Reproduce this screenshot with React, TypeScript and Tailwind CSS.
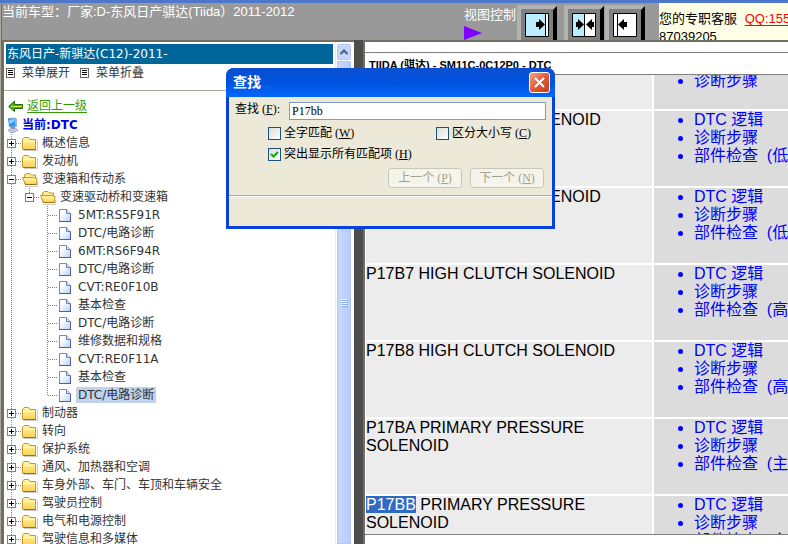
import type { ReactNode } from "react";
import { clsx } from "clsx";

type NodeKind = "closed" | "open" | "page";

type TreeNode = {
  label: string;
  kind: NodeKind;
  level: number;
  last?: boolean;
  selected?: boolean;
};

const tree: TreeNode[] = [
  { label: "概述信息", kind: "closed", level: 0 },
  { label: "发动机", kind: "closed", level: 0 },
  { label: "变速箱和传动系", kind: "open", level: 0 },
  { label: "变速驱动桥和变速箱", kind: "open", level: 1, last: true },
  { label: "5MT:RS5F91R", kind: "page", level: 2 },
  { label: "DTC/电路诊断", kind: "page", level: 2 },
  { label: "6MT:RS6F94R", kind: "page", level: 2 },
  { label: "DTC/电路诊断", kind: "page", level: 2 },
  { label: "CVT:RE0F10B", kind: "page", level: 2 },
  { label: "基本检查", kind: "page", level: 2 },
  { label: "DTC/电路诊断", kind: "page", level: 2 },
  { label: "维修数据和规格", kind: "page", level: 2 },
  { label: "CVT:RE0F11A", kind: "page", level: 2 },
  { label: "基本检查", kind: "page", level: 2 },
  { label: "DTC/电路诊断", kind: "page", level: 2, last: true, selected: true },
  { label: "制动器", kind: "closed", level: 0 },
  { label: "转向", kind: "closed", level: 0 },
  { label: "保护系统", kind: "closed", level: 0 },
  { label: "通风、加热器和空调", kind: "closed", level: 0 },
  { label: "车身外部、车门、车顶和车辆安全", kind: "closed", level: 0 },
  { label: "驾驶员控制", kind: "closed", level: 0 },
  { label: "电气和电源控制", kind: "closed", level: 0 },
  { label: "驾驶信息和多媒体", kind: "closed", level: 0 },
];

const codes = [
  { code: "P17B5", name: "LOW BRAKE SOLENOID", links: ["DTC 逻辑", "诊断步骤", "部件检查  (低"] },
  { code: "P17B6", name: "LOW BRAKE SOLENOID", links: ["DTC 逻辑", "诊断步骤", "部件检查  (低"] },
  { code: "P17B7", name: "HIGH CLUTCH SOLENOID", links: ["DTC 逻辑", "诊断步骤", "部件检查  (高"] },
  { code: "P17B8", name: "HIGH CLUTCH SOLENOID", links: ["DTC 逻辑", "诊断步骤", "部件检查  (高"] },
  { code: "P17BA", name: "PRIMARY PRESSURE SOLENOID", links: ["DTC 逻辑", "诊断步骤", "部件检查  (主"] },
  { code: "P17BB", name: "PRIMARY PRESSURE SOLENOID", links: ["DTC 逻辑", "诊断步骤", "部件检查  (主"], found: true },
];

const sans = "font-['Liberation_Sans','Noto_Sans_CJK_SC',sans-serif]";
const wide = "font-['DejaVu_Sans','Noto_Sans_CJK_SC',sans-serif]";
const serif = "font-['Liberation_Serif','Noto_Sans_CJK_SC',serif]";

function TreeLine({ box, last, dots = true }: { box?: "plus" | "minus"; last?: boolean; dots?: boolean }) {
  return (
    <svg width="18" height="18" className="shrink-0" shapeRendering="crispEdges" aria-hidden="true">
      <path d={last ? "M7.5 0V9" : "M7.5 0V18"} stroke="#808080" strokeDasharray="1 1" />
      {dots && <path d="M8 9.5H18" stroke="#808080" strokeDasharray="1 1" />}
      {box && (
        <>
          <rect x="3.5" y="5.5" width="8" height="8" fill="#fff" stroke="#808080" />
          <path d={box === "plus" ? "M5 9.5H10M7.5 7V12" : "M5 9.5H10"} stroke="#000" />
        </>
      )}
    </svg>
  );
}

function NodeIcon({ kind }: { kind: NodeKind }) {
  if (kind === "page") {
    return (
      <svg width="18" height="18" className="shrink-0" aria-hidden="true">
        <defs>
          <linearGradient id="pageFill" x1="0" y1="0" x2="1" y2="1">
            <stop offset="0.3" stopColor="#fdfeff" />
            <stop offset="1" stopColor="#b3d2f7" />
          </linearGradient>
        </defs>
        <path d="M1.500 3.500H8.500L12.500 7.500V15.500H1.500Z" fill="url(#pageFill)" stroke="#6b8fd6" />
        <path d="M8.500 3.500V7.500H12.500" fill="#cfe0f8" stroke="#6b7fc0" />
        <path d="M1 15.500H13M12.500 8V16" stroke="#565a9c" />
      </svg>
    );
  }
  return (
    <svg width="18" height="18" className="shrink-0" aria-hidden="true">
      <defs>
        <linearGradient id="folderFill" x1="0" y1="0" x2="0" y2="1">
          <stop offset="0" stopColor="#fff6a8" />
          <stop offset="1" stopColor="#f9d056" />
        </linearGradient>
      </defs>
      {kind === "closed" ? (
        <>
          <path d="M2 16.500H15.500V6" fill="none" stroke="#ccc" />
          <path d="M.5 15V5.500L2 3.500H6.500L8 5.500H13.500V15.500H1Z" fill="url(#folderFill)" stroke="#c9952a" />
          <path d="M1.500 7.500H13" stroke="#fffbd8" />
          <path d="M1 15.500H14" stroke="#a06f0d" />
        </>
      ) : (
        <>
          <path d="M3 16.500H15.500V12" fill="none" stroke="#ccc" />
          <path d="M2.500 14V5L4 3.500H8L9.500 5H13.500V9" fill="#fdeb9a" stroke="#c9952a" />
          <path d="M.5 7.500H11.500L15 8.500L14.500 14.500H3.500Z" fill="url(#folderFill)" stroke="#c9952a" />
          <path d="M3 14.500H14.500" stroke="#a06f0d" />
        </>
      )}
    </svg>
  );
}

function TreeRow({ node }: { node: TreeNode }) {
  const box = node.kind === "closed" ? "plus" : node.kind === "open" ? "minus" : undefined;
  return (
    <li className="flex h-[18px] items-center">
      {node.level > 0 && <TreeLine dots={false} />}
      {node.level > 1 && <span className="w-[18px] shrink-0" />}
      <TreeLine box={box} last={node.last} />
      <NodeIcon kind={node.kind} />
      <a
        href="#node"
        className={clsx("px-0.5 leading-4 whitespace-nowrap text-[#333]", node.selected && "bg-[#c1d2ee]")}
      >
        {node.label}
      </a>
    </li>
  );
}

function ListIcon() {
  return (
    <svg width="10" height="10" className="mr-1.5" shapeRendering="crispEdges" aria-hidden="true">
      <rect x=".5" y=".5" width="8" height="9" fill="#fff" stroke="#666" />
      <path d="M2 2.500H7M2 4.500H7M2 6.500H7" stroke="#000" />
    </svg>
  );
}

function Sidebar() {
  return (
    <aside className={clsx("flex w-[350px] shrink-0 overflow-hidden bg-white text-[12px]", wide)}>
      <div className="min-w-0 flex-1">
        <h1 className="mx-0.5 mt-0.5 h-5 bg-[#006699] pl-px leading-5 whitespace-nowrap text-white">
          东风日产-新骐达(C12)-2011-
        </h1>
        <div className="flex h-[27px] items-center gap-2.5 border-b border-[#aca899] pb-2 pl-0.5 text-[#333]">
          <button className="flex items-center"><ListIcon />菜单展开</button>
          <button className="flex items-center"><ListIcon />菜单折叠</button>
        </div>
        <div className="mt-1.5 flex h-[18px] items-center gap-1 pl-1">
          <svg width="15" height="12" viewBox="0 0 15 12" aria-hidden="true">
            <path d="M.7 6.500L6.500 1V4.500H14.500V8.500H6.500V11.500Z" fill="#3cbb1e" stroke="#1f6b10" />
            <path d="M3 6.500H14" stroke="#d8e83a" />
          </svg>
          <a href="#up" className="text-[#339900] underline underline-offset-2">返回上一级</a>
        </div>
        <div className="mt-px flex h-[18px] items-center gap-0.5 pl-0.5 font-bold text-[#0000e6]">
          <svg width="14" height="16" viewBox="0 0 14 16" aria-hidden="true">
            <path d="M2 1L9 .5L11 2V10L4 11Z" fill="#9fb8d8" />
            <path d="M2 1.500L8.500 1.500L9.500 9.500L3 9.500Z" fill="#2f95ee" />
            <path d="M3 3L8 2L8.500 4.500L3.500 7Z" fill="#8fd0ff" />
            <path d="M5 10H9V12H5Z" fill="#8b8fa8" />
            <path d="M2 13L5 11.500H10L12 13L8 15.500H4Z" fill="#c5c9dc" stroke="#8b8fa8" strokeWidth=".6" />
          </svg>
          当前:DTC
        </div>
        <ul>
          {tree.map((node, i) => (
            <TreeRow key={i} node={node} />
          ))}
        </ul>
      </div>
      <div className="flex w-[19px] shrink-0 flex-col border-l border-[#eeede5] bg-white px-px">
        <button aria-label="向上滚动" className="mt-0.5 grid h-4 w-3.5 place-items-center rounded-xs border border-[#b3c7f5] bg-[#c8d6fb]">
          <svg width="10" height="8" viewBox="0 0 10 8" aria-hidden="true">
            <path d="M1.500 6L5 2.500L8.500 6" fill="none" stroke="#4d6185" strokeWidth="2.200" />
          </svg>
        </button>
        <div className="mt-px flex w-3.5 flex-1 items-center justify-center border border-[#b3c7f5] bg-linear-to-r from-[#c9d6fc] to-[#b9cdfa]">
          <svg width="7" height="8" shapeRendering="crispEdges" aria-hidden="true">
            <path d="M0 .5H6M0 2.500H6M0 4.500H6M0 6.500H6" stroke="#eef4fe" />
            <path d="M1 1.500H7M1 3.500H7M1 5.500H7M1 7.500H7" stroke="#8cb0f8" />
          </svg>
        </div>
      </div>
    </aside>
  );
}

function ViewButton({ label, children }: { label: string; children: ReactNode }) {
  return (
    <button aria-label={label} className="block">
      <svg width="41" height="36" viewBox="0 0 41 36" aria-hidden="true">
        <path d="M0 0H40L36 4V36H0Z" fill="#b2b2b2" />
        <path d="M4 4H36V36H4Z" fill="#808080" />
        <path d="M36 5L40 1V36H36Z" fill="#000" />
        <path d="M8.500 8.500H31.500V31.500H8.500Z" fill="#fff" stroke="#000" />
        {children}
      </svg>
    </button>
  );
}

function TopBar() {
  return (
    <header className={clsx("flex h-[37px] shrink-0 overflow-hidden bg-[#999] text-[13px]", sans)}>
      <p className="min-w-0 flex-1 truncate pt-px leading-4 text-white">
        当前车型：厂家:D-东风日产骐达(Tiida）2011-2012
      </p>
      <div className="flex w-[195px] shrink-0 pt-0.5">
        <div className="w-[53px] shrink-0 text-white">
          <div className="leading-5">视图控制</div>
          <svg width="18" height="14" className="mt-px" aria-hidden="true">
            <path d="M0 0L18 7L0 14Z" fill="#8000ff" />
          </svg>
        </div>
        <div className="flex">
          <ViewButton label="展开左侧">
            <path d="M9 9H28V31H9Z" fill="#bbecff" />
            <path d="M28.500 9V31" stroke="#000" />
            <path d="M19 17H22V14L28 19.500L22 25V22H19Z" fill="#000" />
          </ViewButton>
          <span className="w-1.5" />
          <ViewButton label="左右均分">
            <path d="M9 9H20V31H9Z" fill="#bbecff" />
            <path d="M20.500 9V31" stroke="#000" />
            <path d="M12 17H14V14L20 19.500L14 25V22H12ZM30 17H28V14L22 19.500L28 25V22H30Z" fill="#000" />
          </ViewButton>
          <ViewButton label="展开右侧">
            <path d="M12.500 9V31" stroke="#000" />
            <path d="M22 17H19V14L13 19.500L19 25V22H22Z" fill="#000" />
          </ViewButton>
        </div>
      </div>
      <div className="w-[129px] shrink-0 overflow-hidden bg-[#ffffe6] pt-[7px] leading-[18px] whitespace-nowrap text-black">
        您的专职客服 <a href="#qq" className="ml-1 text-[#f00] underline underline-offset-2">QQ:155</a>
        <div>87039205</div>
      </div>
    </header>
  );
}

const nameCell = "border-r-2 border-b-2 border-white bg-[#ececec] p-0 align-top text-black";
const linkCell = "overflow-hidden border-b-2 border-white bg-[#dcdcdc] p-0 align-top text-[#0000ff]";

function CodeTable() {
  return (
    <table className="-mt-[3px] w-full table-fixed border-collapse text-[16px] leading-[18px]">
      <colgroup>
        <col className="w-[68%]" />
        <col />
      </colgroup>
      <tbody>
        {/* tail of the entry scrolled off the top */}
        <tr className="h-[38px]">
          <td className={nameCell} />
          <td className={linkCell}>
            <ul className="list-disc pl-10">
              <li><a href="#dtc">诊断步骤</a></li>
            </ul>
          </td>
        </tr>
        {codes.map((row) => (
          <tr key={row.code} className="h-[77px]">
            <td className={nameCell}>
              {row.found ? <mark className="bg-[#316ac5] text-white">{row.code}</mark> : row.code} {row.name}
            </td>
            <td className={linkCell}>
              <ul className="list-disc pl-10">
                {row.links.map((link) => (
                  <li key={link}>
                    <a href="#dtc" className="whitespace-pre">{link}</a>
                  </li>
                ))}
              </ul>
            </td>
          </tr>
        ))}
      </tbody>
    </table>
  );
}

function FindDialog() {
  const check = "grid size-[13px] shrink-0 appearance-none place-items-center border border-[#1c5180] bg-linear-to-br from-[#dcdcd7] to-white";
  const button = "h-5 w-[74px] rounded-[3px] border border-[#c9c7ba] bg-[#f5f4ea] leading-4 text-[#a1a192]";
  return (
    <div
      role="dialog"
      aria-label="查找"
      className={clsx("absolute top-[68px] left-[226px] w-[329px] rounded-t-lg bg-[#0842dc] px-[3px] pb-[3px] text-[12px] text-black", serif)}
    >
      <div className="-mx-[3px] flex h-[29px] items-center justify-between rounded-t-lg bg-linear-to-b from-[#0a4fd0] via-[#0053e0] to-[#0466fb] pr-[5px] pl-[7px]">
        <h2 className="text-[14px] font-bold text-white">查找</h2>
        <button aria-label="关闭" className="grid size-[21px] place-items-center rounded-[3px] border border-white bg-linear-to-br from-[#f0a088] via-[#e35a35] to-[#c93a14]">
          <svg width="13" height="13" aria-hidden="true">
            <path d="M2 2L11 11M11 2L2 11" stroke="#fff" strokeWidth="2" />
          </svg>
        </button>
      </div>
      <div className="bg-[#ece9d8]">
        <div className="h-[98px] px-1.5 pt-[5px]">
          <div className="flex h-[18px] items-center">
            <label htmlFor="find" className="w-[54px] pb-1 leading-4">查找 (<u>F</u>):</label>
            <input id="find" defaultValue="P17bb" className="h-[18px] min-w-0 flex-1 border border-[#7f9db9] bg-white px-0.5 outline-none" />
          </div>
          <div className="mt-1 grid grid-cols-[168px_1fr] gap-y-[3px] pl-[33px] leading-[18px]">
            <label className="flex h-[18px] items-center gap-[3px]">
              <input type="checkbox" className={check} />
              <span>全字匹配 (<u>W</u>)</span>
            </label>
            <label className="flex h-[18px] items-center gap-[3px]">
              <input type="checkbox" className={check} />
              <span>区分大小写 (<u>C</u>)</span>
            </label>
            <label className="flex h-[18px] items-center gap-[3px]">
              <span className="relative flex">
                <input type="checkbox" defaultChecked className={check} />
                <svg width="13" height="13" className="pointer-events-none absolute inset-0" aria-hidden="true">
                  <path d="M3 6L5.500 8.500L10 4" fill="none" stroke="#21a121" strokeWidth="2.200" />
                </svg>
              </span>
              <span>突出显示所有匹配项 (<u>H</u>)</span>
            </label>
          </div>
          <div className="mt-[5px] flex justify-end gap-2 pr-0.5">
            <button disabled className={button}>上一个 (<u>P</u>)</button>
            <button disabled className={button}>下一个 (<u>N</u>)</button>
          </div>
        </div>
        <div className="h-[31px] border-t border-[#aca899]">
          <div className="border-t border-white" />
        </div>
      </div>
    </div>
  );
}

export default function App() {
  return (
    <div className={clsx("relative flex h-screen flex-col overflow-hidden bg-white", sans)}>
      <div className="h-[3px] shrink-0 bg-[#4d77cb]" />
      <div className="flex min-h-0 flex-1 border-l border-[#aca899]">
        <div className="flex min-w-0 flex-1 flex-col border-l border-[#716f64]">
          <TopBar />
          <div className="flex min-h-0 flex-1">
            <div className="flex border-t-2 border-l-2 border-[#716f64]">
              <Sidebar />
            </div>
            <div className="w-[9px] shrink-0 bg-[#4d4d4d]" />
            <main className="flex min-w-0 flex-1 flex-col border-t-2 border-l-2 border-[#716f64] bg-white">
              <div className="h-[11px] shrink-0 border-b border-[#808080]" />
              <h2 className="h-[22px] shrink-0 border-b border-[#808080] pl-1 text-[11px] leading-6 font-bold whitespace-nowrap text-black">
                TIIDA (骐达) - SM11C-0C12P0 - DTC
              </h2>
              <div className="mb-[9px] min-h-0 flex-1 overflow-hidden border-b border-[#808080] pl-px">
                <CodeTable />
              </div>
            </main>
          </div>
        </div>
      </div>
      <FindDialog />
    </div>
  );
}
